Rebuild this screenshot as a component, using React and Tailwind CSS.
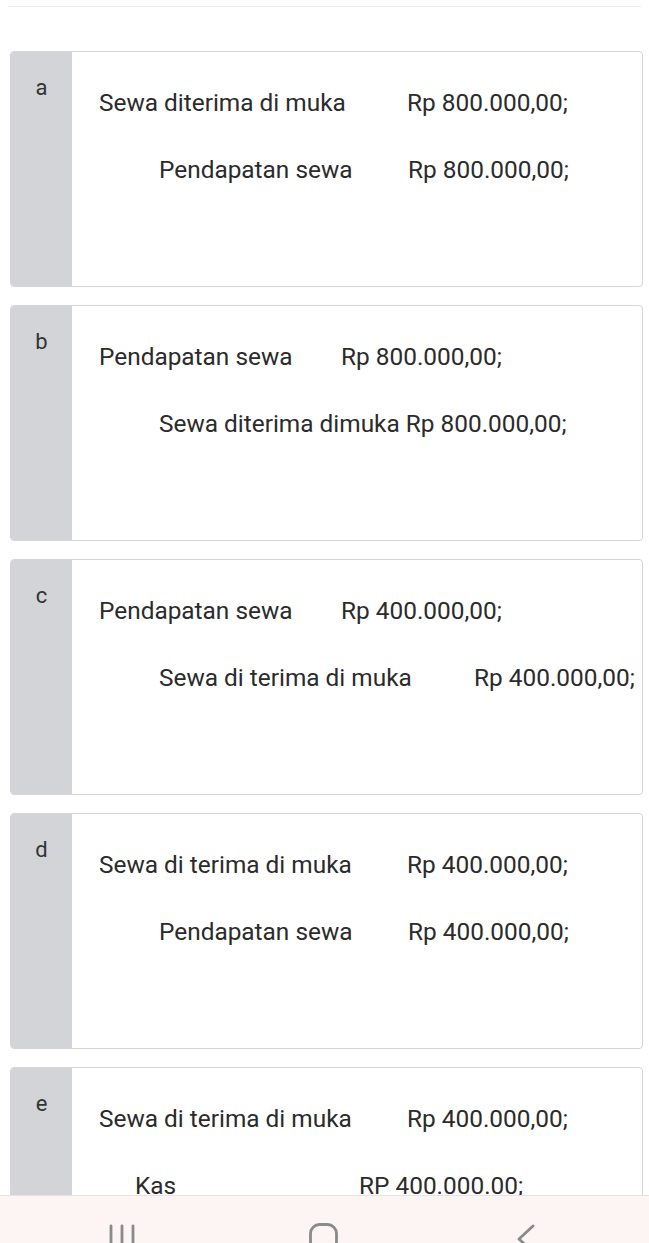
const options = [
  {
    key: 'a',
    rows: [
      { pl: 'pl-[27px]', w: 'w-[308px]', label: 'Sewa diterima di muka', amount: 'Rp 800.000,00;' },
      { pl: 'pl-[87px]', w: 'w-[249px]', label: 'Pendapatan sewa', amount: 'Rp 800.000,00;' },
    ],
  },
  {
    key: 'b',
    rows: [
      { pl: 'pl-[27px]', w: 'w-[242px]', label: 'Pendapatan sewa', amount: 'Rp 800.000,00;' },
      { pl: 'pl-[87px]', w: '', label: 'Sewa diterima dimuka Rp 800.000,00;', amount: '' },
    ],
  },
  {
    key: 'c',
    rows: [
      { pl: 'pl-[27px]', w: 'w-[242px]', label: 'Pendapatan sewa', amount: 'Rp 400.000,00;' },
      { pl: 'pl-[87px]', w: 'w-[315px]', label: 'Sewa di terima di muka', amount: 'Rp 400.000,00;' },
    ],
  },
  {
    key: 'd',
    rows: [
      { pl: 'pl-[27px]', w: 'w-[308px]', label: 'Sewa di terima di muka', amount: 'Rp 400.000,00;' },
      { pl: 'pl-[87px]', w: 'w-[249px]', label: 'Pendapatan sewa', amount: 'Rp 400.000,00;' },
    ],
  },
  {
    key: 'e',
    rows: [
      { pl: 'pl-[27px]', w: 'w-[308px]', label: 'Sewa di terima di muka', amount: 'Rp 400.000,00;' },
      { pl: 'pl-[63px]', w: 'w-[224px]', label: 'Kas', amount: 'RP 400.000.00;' },
    ],
  },
];

function Option({ opt }) {
  return (
    <div className="flex h-[236px] rounded-[4px] border border-[#d5d5d5] overflow-hidden bg-white">
      <div className="w-[61px] shrink-0 bg-[#d2d4d7] pt-[21px] text-center text-[22px] leading-[30px] text-[#333]">
        {opt.key}
      </div>
      <div className="flex-1 pt-[35px] text-[24.4px] leading-[32px] text-[#2b2b2b] whitespace-nowrap">
        {opt.rows.map((r, i) => (
          <div key={i} className={`${r.pl} ${i > 0 ? 'mt-[35px]' : ''} flex`}>
            <span className={`${r.w} shrink-0`}>{r.label}</span>
            {r.amount && <span>{r.amount}</span>}
          </div>
        ))}
      </div>
    </div>
  );
}

export default function App() {
  return (
    <div className="min-h-screen bg-white font-['Roboto','Liberation_Sans',sans-serif]">
      <div className="h-[7px] mx-[8px] border-b border-[#eeeeee]" />
      <div className="pl-[10px] pr-[6px] pt-[44px] pb-[60px] flex flex-col gap-[18px]">
        {options.map((o) => (
          <Option key={o.key} opt={o} />
        ))}
      </div>

      {/* system navigation bar */}
      <div className="fixed bottom-0 left-0 right-0 h-[48px] bg-[#fcf5f4] border-t border-[#ebe1df] overflow-hidden">
        <div className="relative h-full">
          <svg className="absolute left-[108px] top-[28px]" width="30" height="30" viewBox="0 0 30 30">
            <g stroke="#8a8a8a" strokeWidth="2.8" strokeLinecap="round">
              <line x1="3" y1="2" x2="3" y2="28" />
              <line x1="14" y1="2" x2="14" y2="28" />
              <line x1="25" y1="2" x2="25" y2="28" />
            </g>
          </svg>
          <svg className="absolute left-[308px] top-[26px]" width="32" height="32" viewBox="0 0 32 32">
            <rect x="2.5" y="2.5" width="26" height="26" rx="9" fill="none" stroke="#8a8a8a" strokeWidth="2.8" />
          </svg>
          <svg className="absolute left-[514px] top-[28px]" width="24" height="32" viewBox="0 0 24 32">
            <polyline points="19,2 5,15 19,28" fill="none" stroke="#8a8a8a" strokeWidth="2.8" strokeLinecap="round" strokeLinejoin="round" />
          </svg>
        </div>
      </div>
    </div>
  );
}
